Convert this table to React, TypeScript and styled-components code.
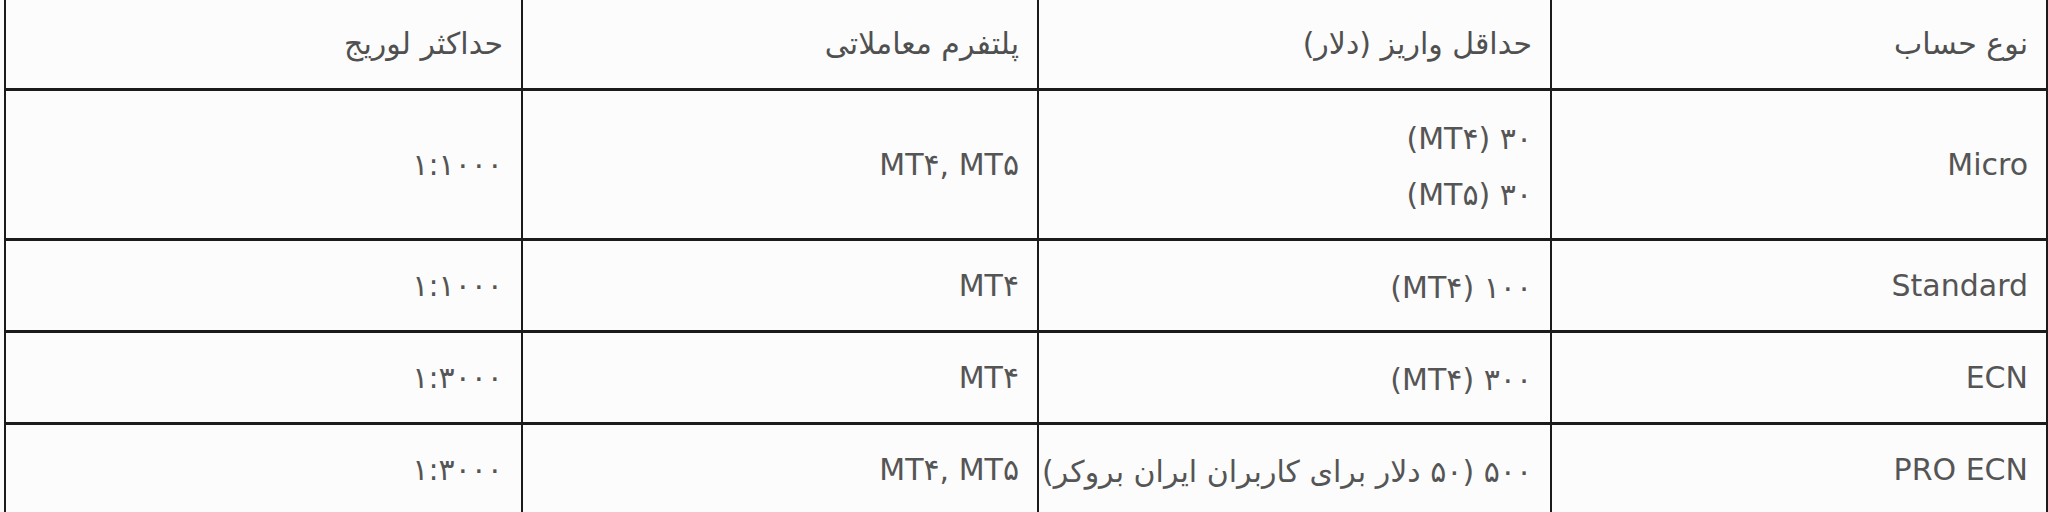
import React from "react";
import styled, { createGlobalStyle } from "styled-components";

interface AccountRow {
  type: string;
  deposit: string[];
  platform: string;
  leverage: string;
}

const headers = ["نوع حساب", "حداقل واریز (دلار)", "پلتفرم معاملاتی", "حداکثر لوریج"];

const rows: AccountRow[] = [
  { type: "Micro", deposit: ["۳۰ (MT۴)", "۳۰ (MT۵)"], platform: "MT۴, MT۵", leverage: "۱:۱۰۰۰" },
  { type: "Standard", deposit: ["۱۰۰ (MT۴)"], platform: "MT۴", leverage: "۱:۱۰۰۰" },
  { type: "ECN", deposit: ["۳۰۰ (MT۴)"], platform: "MT۴", leverage: "۱:۳۰۰۰" },
  {
    type: "PRO ECN",
    deposit: ["۵۰۰ (۵۰ دلار برای کاربران ایران بروکر)"],
    platform: "MT۴, MT۵",
    leverage: "۱:۳۰۰۰",
  },
];

const GlobalStyle = createGlobalStyle`
  html, body {
    margin: 0;
    padding: 0;
    background: #fcfcfc;
  }
  body {
    font-family: "DejaVu Sans", "Noto Sans", sans-serif;
  }
`;

const App: React.FC = () => {
  return (
    <>
      <GlobalStyle />
      <Page>
        <Table dir="rtl">
          {headers.map((h) => (
            <HeadCell key={h}>{h}</HeadCell>
          ))}
          {rows.map((row) => (
            <React.Fragment key={row.type}>
              <Cell>{row.type}</Cell>
              <Cell>
                <Lines>
                  {row.deposit.map((d) => (
                    <span key={d}>{d}</span>
                  ))}
                </Lines>
              </Cell>
              <Cell>{row.platform}</Cell>
              <Cell>{row.leverage}</Cell>
            </React.Fragment>
          ))}
        </Table>
      </Page>
    </>
  );
};

const Page = styled.div`
  width: 2048px;
  height: 512px;
  overflow: hidden;
  padding-left: 4px;
  box-sizing: border-box;
`;

const Table = styled.div`
  display: grid;
  grid-template-columns: 494px 511px 514px 515px;
  grid-template-rows: 88px 147px 89px 89px 89px;
  column-gap: 2px;
  row-gap: 3px;
  background: #1b1b1b;
  border-left: 2px solid #1b1b1b;
  border-right: 2px solid #1b1b1b;
  width: max-content;
`;

const Cell = styled.div`
  background: #fcfcfc;
  display: flex;
  align-items: center;
  justify-content: flex-start;
  padding: 0 18px;
  color: #555;
  font-size: 30px;
  line-height: 1.4;
  white-space: nowrap;
`;

const HeadCell = styled(Cell)`
  color: #505050;
`;

const Lines = styled.div`
  display: flex;
  flex-direction: column;
  gap: 14px;
  padding-top: 4px;
`;

export default App;
